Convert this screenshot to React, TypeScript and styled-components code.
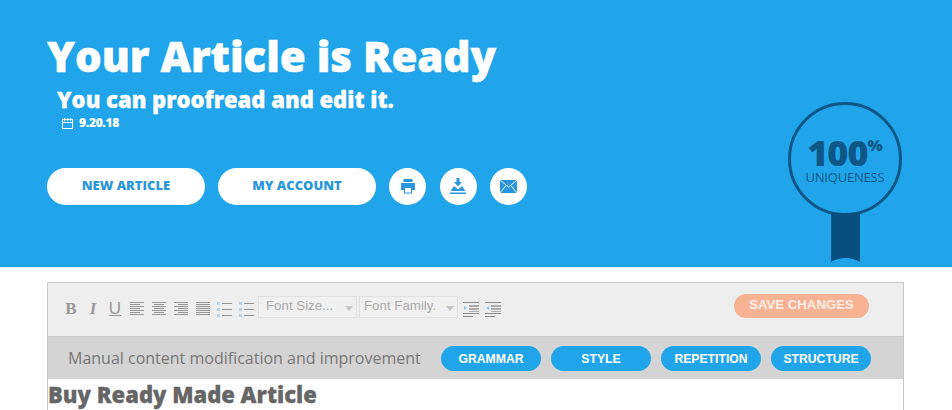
import React from 'react';
import styled, { createGlobalStyle } from 'styled-components';

const GlobalStyle = createGlobalStyle`
  html, body {
    margin: 0;
    padding: 0;
    height: 410px;
    overflow: hidden;
    background: #fff;
    font-family: "Open Sans", sans-serif;
  }
`;

const Page = styled.div`
  width: 952px;
  height: 410px;
  overflow: hidden;
`;

const Hero = styled.header`
  height: 267px;
  box-sizing: border-box;
  background: #20a5eb;
  display: flex;
  justify-content: space-between;
  padding: 0 50px 0 47px;
`;

const HeroText = styled.div`
  display: flex;
  flex-direction: column;
  align-items: flex-start;
`;

const Title = styled.h1`
  margin: 31px 0 0;
  font-size: 42px;
  line-height: 50px;
  font-weight: 800;
  color: #fff;
  -webkit-text-stroke: 0.5px #fff;
`;

const Subtitle = styled.h2`
  margin: 4px 0 0 10px;
  font-size: 22px;
  line-height: 28px;
  font-weight: 800;
  color: #fff;
  -webkit-text-stroke: 0.3px #fff;
`;

const DateRow = styled.div`
  margin: 2px 0 0 15px;
  display: flex;
  align-items: center;
  gap: 6px;
  font-size: 12px;
  line-height: 16px;
  font-weight: 800;
  letter-spacing: -0.3px;
  color: #fff;
`;

const Actions = styled.div`
  margin-top: 37px;
  display: flex;
  align-items: center;
`;

const PillLink = styled.a`
  width: 158px;
  height: 37px;
  box-sizing: border-box;
  padding-bottom: 3px;
  margin-right: 13px;
  border-radius: 19px;
  background: #fff;
  display: flex;
  align-items: center;
  justify-content: center;
  font-size: 13px;
  font-weight: 800;
  color: #2a97dc;
`;

const RoundButton = styled.a`
  width: 37px;
  height: 37px;
  box-sizing: border-box;
  padding-bottom: 1px;
  margin-right: 13.5px;
  border-radius: 50%;
  background: #fff;
  display: flex;
  align-items: center;
  justify-content: center;
`;

const Badge = styled.div`
  margin-top: 102px;
  display: flex;
  flex-direction: column;
  align-items: center;
`;

const BadgeCircle = styled.div`
  width: 114px;
  height: 114px;
  box-sizing: border-box;
  border: 3px solid #0d5686;
  border-radius: 50%;
  display: flex;
  flex-direction: column;
  align-items: center;
  color: #0d5686;
`;

const BadgeValue = styled.div`
  margin-top: 29px;
  display: flex;
  font-size: 36px;
  line-height: 38px;
  font-weight: 800;
  letter-spacing: -1px;
`;

const BadgePercent = styled.span`
  font-size: 16px;
  line-height: 22px;
  letter-spacing: 0;
`;

const BadgeLabel = styled.div`
  margin-top: -3px;
  font-size: 13px;
  line-height: 16px;
  letter-spacing: -0.2px;
`;

const Ribbon = styled.svg`
  display: block;
  margin-top: -3px;
`;

const Editor = styled.section`
  width: 857px;
  height: 128px;
  box-sizing: border-box;
  margin: 15px 0 0 47px;
  border: 1px solid #c8c8c8;
  border-bottom: 0;
  overflow: hidden;
`;

const Toolbar = styled.div`
  height: 54px;
  box-sizing: border-box;
  background: #eee;
  border-bottom: 1px solid #ccc;
  display: flex;
  align-items: flex-start;
  padding: 14px 34px 0 12px;
`;

const ToolIcons = styled.div`
  display: flex;
  align-items: center;
  height: 24px;
`;

const ToolGlyph = styled.span<{ $italic?: boolean; $underline?: boolean }>`
  width: 22px;
  text-align: center;
  font-size: 17px;
  line-height: 22px;
  color: #999;
  font-style: ${(p) => (p.$italic ? 'italic' : 'normal')};
  text-decoration: ${(p) => (p.$underline ? 'underline' : 'none')};
  font-family: ${(p) => (p.$underline ? '"Liberation Sans", sans-serif' : '"Liberation Serif", serif')};
  font-weight: ${(p) => (p.$underline ? 400 : 700)};
`;

const IconSlot = styled.span`
  width: 22px;
  height: 18px;
  display: flex;
  align-items: center;
  justify-content: center;
`;

const SelectBox = styled.div<{ $width: number; $inset: number }>`
  width: ${(p) => p.$width}px;
  height: 22px;
  box-sizing: border-box;
  margin: -1px 2px 0 0;
  background: #f0f0f0;
  border: 1px solid #e0e0e0;
  display: flex;
  align-items: center;
  justify-content: space-between;
  padding: 0 3px 4px ${(p) => p.$inset}px;
  font-family: "Liberation Sans", sans-serif;
  font-size: 13.3px;
  color: #aaa;
`;

const Caret = styled.span`
  width: 0;
  height: 0;
  margin-top: 6px;
  border-left: 4px solid transparent;
  border-right: 4px solid transparent;
  border-top: 5px solid #c4c4c4;
`;

const SaveButton = styled.button`
  margin: -3px 0 0 auto;
  width: 135px;
  height: 24px;
  padding: 0 0 3px;
  border: 0;
  border-radius: 13px;
  background: #f7b294;
  color: #fdeee6;
  font-family: "Liberation Sans", sans-serif;
  font-size: 13.2px;
  font-weight: 700;
`;

const ModeBar = styled.div`
  height: 42px;
  box-sizing: border-box;
  background: #d4d4d4;
  display: flex;
  align-items: center;
  padding: 1px 0 1px 20px;
`;

const ModeText = styled.div`
  width: 373px;
  margin-top: -1px;
  font-size: 16px;
  color: #777;
`;

const ModeButtons = styled.div`
  display: flex;
  gap: 10px;
  margin-top: 1px;
`;

const ModeButton = styled.button`
  width: 100px;
  height: 25px;
  padding: 0;
  border: 0;
  border-radius: 13px;
  background: #20a5eb;
  color: #fff;
  font-family: "Liberation Sans", sans-serif;
  font-size: 12.2px;
  font-weight: 700;
`;

const Content = styled.div`
  background: #fff;
`;

const ContentTitle = styled.h3`
  margin: 0;
  font-size: 22px;
  line-height: 30px;
  font-weight: 800;
  color: #666;
  -webkit-text-stroke: 0.3px #666;
`;

const Lines = ({ rows }: { rows: [number, number][] }) => (
  <svg width="16" height="16" viewBox="0 0 16 16">
    {rows.map(([x, w], i) => (
      <rect key={i} x={x} y={1 + i * 2} width={w} height="1" fill="#949494" />
    ))}
  </svg>
);

const alignLeft: [number, number][] = [[1, 14], [1, 10], [1, 14], [1, 10], [1, 14], [1, 10], [1, 14]];
const alignCenter: [number, number][] = [[1, 14], [3, 10], [1, 14], [3, 10], [1, 14], [3, 10], [1, 14]];
const alignRight: [number, number][] = [[1, 14], [5, 10], [1, 14], [5, 10], [1, 14], [5, 10], [1, 14]];
const alignFull: [number, number][] = [[1, 14], [1, 14], [1, 14], [1, 14], [1, 14], [1, 14], [1, 14]];

const ListIcon = () => (
  <svg width="18" height="18" viewBox="0 0 18 18">
    <rect x="6" y="3" width="10" height="1" fill="#949494" />
    <rect x="6" y="9" width="10" height="1" fill="#949494" />
    <rect x="6" y="15" width="10" height="1" fill="#949494" />
    <rect x="1" y="2" width="3" height="3" fill="#b5d3ea" />
    <rect x="1" y="8" width="3" height="3" fill="#b5d3ea" />
    <rect x="1" y="14" width="3" height="3" fill="#b5d3ea" />
  </svg>
);

const IndentIcon = ({ flip }: { flip?: boolean }) => (
  <svg width="16" height="16" viewBox="0 0 16 16">
    <rect x="0" y="1" width="16" height="1" fill="#8a8a8a" />
    <rect x="6" y="4" width="10" height="2" fill="#aaa" />
    <rect x="6" y="7" width="10" height="2" fill="#aaa" />
    <rect x="6" y="10" width="10" height="1" fill="#aaa" />
    <rect x="0" y="12" width="16" height="1" fill="#8a8a8a" />
    <rect x="0" y="15" width="10" height="1" fill="#8a8a8a" />
    <path d={flip ? 'M1 7l3-2v4z' : 'M4 7L1 5v4z'} fill="#8cc3ea" />
  </svg>
);

const PrintIcon = () => (
  <svg width="16" height="16" viewBox="0 0 16 16" fill="#2a97dc">
    <rect x="3.500" y="1" width="9" height="3" />
    <path d="M1 5h14v7h-3V9H4v3H1z" />
    <rect x="4.500" y="9.500" width="7" height="5.500" fill="#fff" stroke="#2a97dc" />
  </svg>
);

const DownloadIcon = () => (
  <svg width="18" height="18" viewBox="0 0 18 18" fill="#2a97dc">
    <path d="M7.500 1h3v4h2.500L9 9.500 5 5h2.500z" />
    <path d="M1.500 14l3.500-5 4 3.500L13 9l3.500 5z" />
    <rect x="1" y="15.500" width="16" height="1.500" />
  </svg>
);

const MailIcon = () => (
  <svg width="17" height="13" viewBox="0 0 17 13">
    <rect width="17" height="13" fill="#2a97dc" />
    <path d="M0 0l8.500 7L17 0M0 13l6-7.500M17 13l-6-7.500" fill="none" stroke="#fff" strokeWidth="0.9" />
  </svg>
);

const CalendarIcon = () => (
  <svg width="11" height="11" viewBox="0 0 11 11" fill="none" stroke="#fff" strokeWidth="1">
    <rect x="0.500" y="1.500" width="10" height="9" />
    <path d="M0.500 4.500h10M2.500 0v3M5.500 0v3M8.500 0v3" />
  </svg>
);

const App: React.FC = () => {
  const modes = ['GRAMMAR', 'STYLE', 'REPETITION', 'STRUCTURE'];

  return (
    <Page>
      <GlobalStyle />
      <Hero>
        <HeroText>
          <Title>Your Article is Ready</Title>
          <Subtitle>You can proofread and edit it.</Subtitle>
          <DateRow>
            <CalendarIcon />
            9.20.18
          </DateRow>
          <Actions>
            <PillLink>NEW ARTICLE</PillLink>
            <PillLink>MY ACCOUNT</PillLink>
            <RoundButton><PrintIcon /></RoundButton>
            <RoundButton><DownloadIcon /></RoundButton>
            <RoundButton><MailIcon /></RoundButton>
          </Actions>
        </HeroText>
        <Badge>
          <BadgeCircle>
            <BadgeValue>100<BadgePercent>%</BadgePercent></BadgeValue>
            <BadgeLabel>UNIQUENESS</BadgeLabel>
          </BadgeCircle>
          <Ribbon width="29" height="49" viewBox="0 0 29 49">
            <path d="M0 0h29v49c-5-3-10-4-14.500-4S5 46 0 49z" fill="#07507f" />
          </Ribbon>
        </Badge>
      </Hero>
      <Editor>
        <Toolbar>
          <ToolIcons>
            <ToolGlyph>B</ToolGlyph>
            <ToolGlyph $italic>I</ToolGlyph>
            <ToolGlyph $underline>U</ToolGlyph>
            <IconSlot><Lines rows={alignLeft} /></IconSlot>
            <IconSlot><Lines rows={alignCenter} /></IconSlot>
            <IconSlot><Lines rows={alignRight} /></IconSlot>
            <IconSlot><Lines rows={alignFull} /></IconSlot>
            <IconSlot><ListIcon /></IconSlot>
            <IconSlot><ListIcon /></IconSlot>
          </ToolIcons>
          <SelectBox $width={99} $inset={7}>Font Size...<Caret /></SelectBox>
          <SelectBox $width={99} $inset={4}>Font Family.<Caret /></SelectBox>
          <ToolIcons>
            <IconSlot><IndentIcon /></IconSlot>
            <IconSlot><IndentIcon flip /></IconSlot>
          </ToolIcons>
          <SaveButton>SAVE CHANGES</SaveButton>
        </Toolbar>
        <ModeBar>
          <ModeText>Manual content modification and improvement</ModeText>
          <ModeButtons>
            {modes.map((m) => (
              <ModeButton key={m}>{m}</ModeButton>
            ))}
          </ModeButtons>
        </ModeBar>
        <Content>
          <ContentTitle>Buy Ready Made Article</ContentTitle>
        </Content>
      </Editor>
    </Page>
  );
};

export default App;
